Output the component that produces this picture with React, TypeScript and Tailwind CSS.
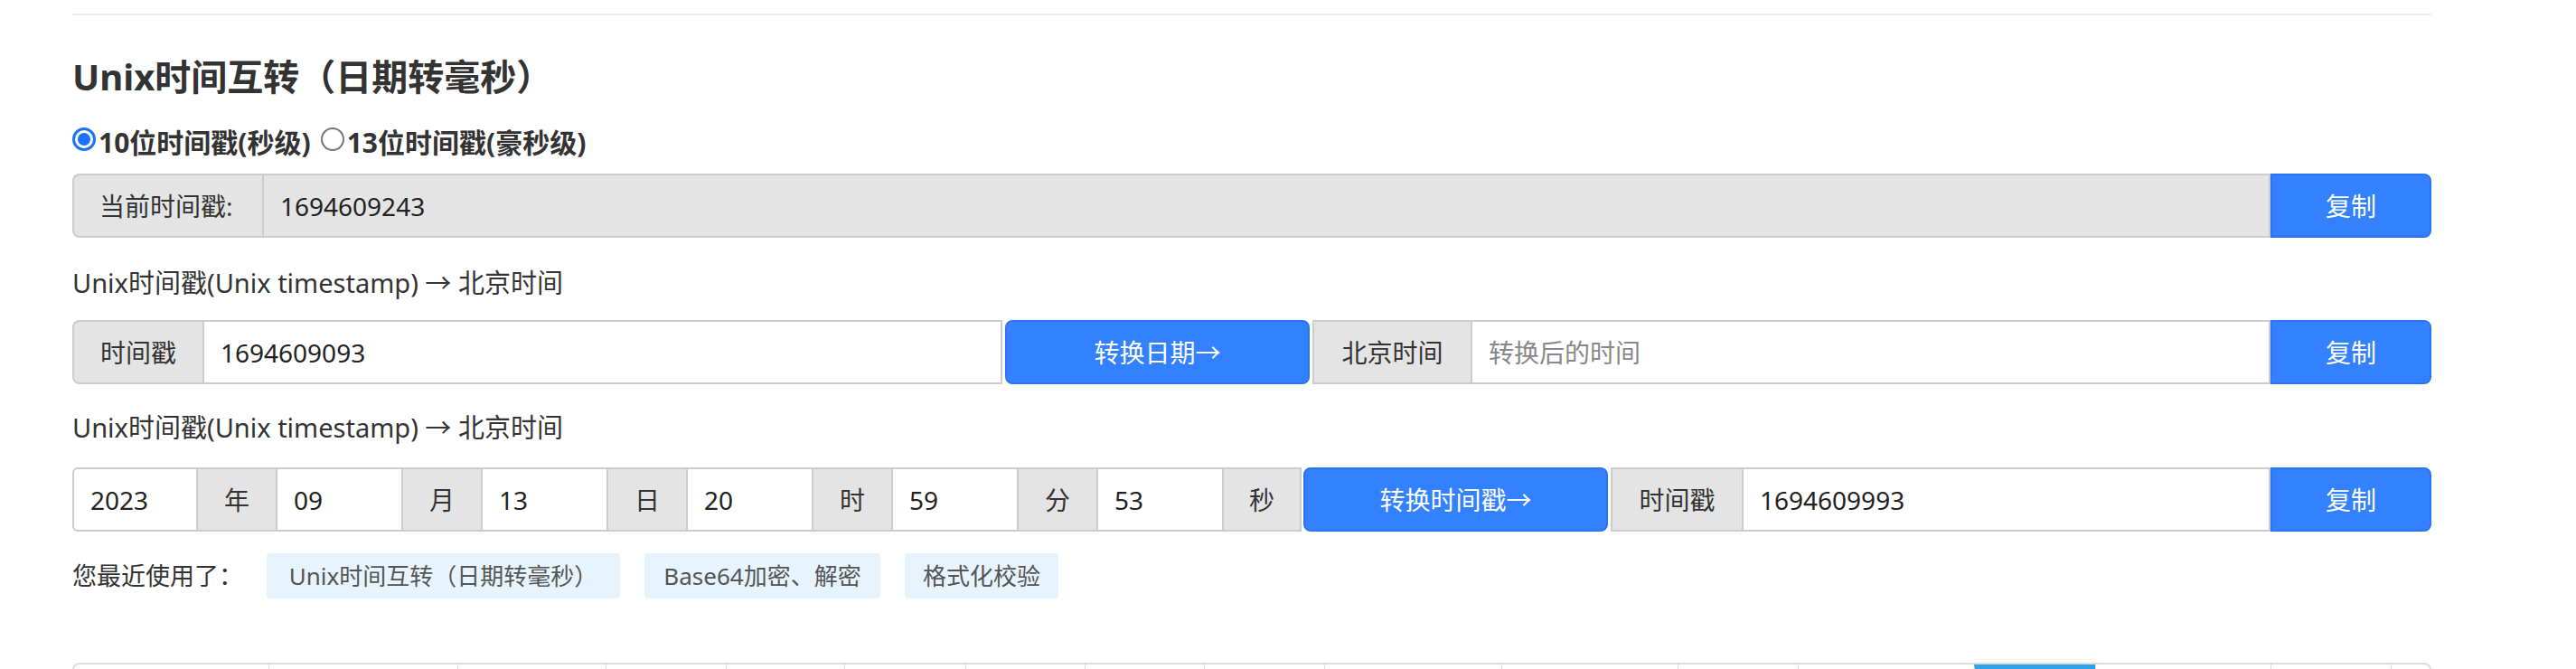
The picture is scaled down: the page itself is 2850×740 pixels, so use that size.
const navCells = [
  'w-[215px]',
  'w-[209px]',
  'w-[164px]',
  'w-[133px]',
  'w-[131px]',
  'w-[134px]',
  'w-[132px]',
  'w-[132px]',
  'w-[133px]',
  'w-[196px]',
  'w-[195px]',
  'w-[133px]',
  'w-[195px]',
  'w-[134px]',
  'w-[194px]',
  'w-[133px]',
];

function Radio({ checked }: { checked?: boolean }) {
  if (checked) {
    return (
      <span className="mb-[6px] flex h-[26px] w-[26px] shrink-0 items-center justify-center rounded-full border-[3px] border-[#1a73f8] bg-white p-[3px]">
        <span className="h-full w-full rounded-full bg-[#1a73f8]" />
      </span>
    );
  }
  return <span className="mb-[6px] h-[26px] w-[26px] shrink-0 rounded-full border-2 border-[#767676] bg-white" />;
}

function CopyButton() {
  return (
    <button className="h-full w-[178px] shrink-0 rounded-r-[8px] border-2 border-[#2a75f3] bg-[#3381ff] text-[28px] text-white">
      复制
    </button>
  );
}

export default function App() {
  const dateParts = [
    { v: '2023', u: '年' },
    { v: '09', u: '月' },
    { v: '13', u: '日' },
    { v: '20', u: '时' },
    { v: '59', u: '分' },
    { v: '53', u: '秒' },
  ];

  return (
    <div className="h-[740px] overflow-hidden bg-white font-['Noto_Sans','Noto_Sans_CJK_SC',sans-serif] text-[#333]">
      <div className="ml-[80px] w-[2610px] pt-[15px]">
        <div className="h-[2px] bg-[#eeeeee]" />

        <h3 className="mt-[46px] flex h-[44px] items-center text-[40px] font-bold leading-none">
          Unix时间互转（日期转毫秒）
        </h3>

        <div className="mt-[30px] flex h-[40px] items-center text-[30px] font-bold">
          <Radio checked />
          <span className="ml-[3px]">10位时间戳(秒级)</span>
          <span className="ml-[11px]" />
          <Radio />
          <span className="ml-[3px]">13位时间戳(豪秒级)</span>
        </div>

        {/* current timestamp */}
        <div className="mt-[15px] flex h-[71px] text-[28px]">
          <div className="flex w-[210px] shrink-0 items-center rounded-l-[8px] border-2 border-r-0 border-[#cccccc] bg-[#e4e4e4] px-[28px]">
            当前时间戳:
          </div>
          <div className="flex flex-1 items-center border-2 border-[#cccccc] bg-[#e4e4e4] pl-[18px] text-[#222]">
            1694609243
          </div>
          <CopyButton />
        </div>

        <div className="mt-[30px] flex h-[40px] items-center text-[29px]">
          Unix时间戳(Unix timestamp) → 北京时间
        </div>

        {/* timestamp -> date */}
        <div className="mt-[21px] flex h-[71px] text-[28px]">
          <div className="flex w-[144px] shrink-0 items-center justify-center rounded-l-[8px] border-2 border-r-0 border-[#cccccc] bg-[#e4e4e4]">
            时间戳
          </div>
          <div className="flex flex-1 items-center border-2 border-[#cccccc] bg-white pl-[18px] text-[#222]">
            1694609093
          </div>
          <button className="mx-[3px] h-full w-[337px] shrink-0 rounded-[8px] border-2 border-[#2a75f3] bg-[#3381ff] text-white">
            转换日期→
          </button>
          <div className="flex w-[175px] shrink-0 items-center justify-center border-2 border-r-0 border-[#cccccc] bg-[#e4e4e4]">
            北京时间
          </div>
          <div className="flex flex-1 items-center border-2 border-[#cccccc] bg-white pl-[18px] text-[#888]">
            转换后的时间
          </div>
          <CopyButton />
        </div>

        <div className="mt-[28px] flex h-[40px] items-center text-[29px]">
          Unix时间戳(Unix timestamp) → 北京时间
        </div>

        {/* date -> timestamp */}
        <div className="mt-[24px] flex h-[71px] text-[28px]">
          {dateParts.map((p, i) => (
            <div key={p.u} className="flex h-full">
              <div
                className={
                  i === 0
                    ? 'flex w-[137px] items-center rounded-l-[6px] border-y-2 border-l-2 border-[#cccccc] bg-white pl-[18px] text-[#222]'
                    : 'flex w-[139px] items-center border-y-2 border-l-2 border-[#cccccc] bg-white pl-[18px] text-[#222]'
                }
              >
                {p.v}
              </div>
              <div
                className={
                  i === dateParts.length - 1
                    ? 'flex w-[88px] items-center justify-center border-2 border-[#cccccc] bg-[#e4e4e4]'
                    : 'flex w-[88px] items-center justify-center border-y-2 border-l-2 border-[#cccccc] bg-[#e4e4e4]'
                }
              >
                {p.u}
              </div>
            </div>
          ))}
          <button className="ml-[2px] mr-[3px] h-full w-[337px] shrink-0 rounded-[8px] border-2 border-[#2a75f3] bg-[#3381ff] text-white">
            转换时间戳→
          </button>
          <div className="flex w-[145px] shrink-0 items-center justify-center border-2 border-r-0 border-[#cccccc] bg-[#e4e4e4]">
            时间戳
          </div>
          <div className="flex flex-1 items-center border-2 border-[#cccccc] bg-white pl-[18px] text-[#222]">
            1694609993
          </div>
          <CopyButton />
        </div>

        {/* recently used */}
        <div className="mt-[24px] flex h-[50px] items-center text-[26px]">
          <span className="w-[215px] shrink-0 text-[27px]">您最近使用了：</span>
          <div className="flex h-full gap-[27px] text-[#555]">
            <span className="flex w-[391px] items-center justify-center rounded-[4px] bg-[#e8f4fd]">
              Unix时间互转（日期转毫秒）
            </span>
            <span className="flex w-[261px] items-center justify-center rounded-[4px] bg-[#e8f4fd]">
              Base64加密、解密
            </span>
            <span className="flex w-[170px] items-center justify-center rounded-[4px] bg-[#e8f4fd]">
              格式化校验
            </span>
          </div>
        </div>

        {/* tool nav, only its top edge shows */}
        <div className="mt-[71px] flex h-[60px] rounded-t-[8px] border-x-2 border-t-2 border-[#dddddd]">
          {navCells.map((w, i) => (
            <div
              key={i}
              className={
                i === 13
                  ? `${w} shrink-0 border-l border-[#dddddd] border-t-[5px] border-t-[#2ea1e8]`
                  : i === 0
                    ? `${w} shrink-0`
                    : `${w} shrink-0 border-l border-[#dddddd]`
              }
            />
          ))}
          <div className="flex-1 border-l border-[#dddddd]" />
        </div>
      </div>
    </div>
  );
}
